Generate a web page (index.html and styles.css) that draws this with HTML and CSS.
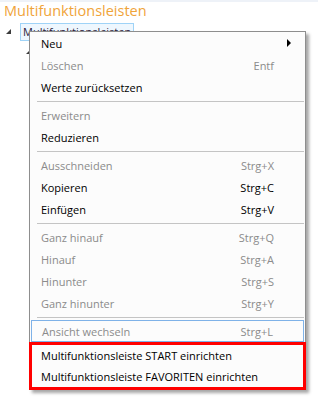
FILE: index.html
```html
<!DOCTYPE html>
<html>
<head>
<meta charset="utf-8">
<link rel="stylesheet" href="styles.css">
</head>
<body>
<div class="topline"></div>
<div class="title">Multifunktionsleisten</div>
<div class="tree">
  <div class="node">
    <span class="tri"></span>
    <span class="sel">Multifunktionsleisten</span>
  </div>
  <div class="node child">
    <span class="tri"></span>
  </div>
</div>

<div class="menu">
  <div class="item"><span class="label">Neu</span><span class="arrow"></span></div>
  <div class="item dis"><span class="label">Löschen</span><span class="key">Entf</span></div>
  <div class="item"><span class="label">Werte zurücksetzen</span></div>
  <div class="sep"></div>
  <div class="item dis"><span class="label">Erweitern</span></div>
  <div class="item"><span class="label">Reduzieren</span></div>
  <div class="sep"></div>
  <div class="item dis"><span class="label">Ausschneiden</span><span class="key">Strg+X</span></div>
  <div class="item"><span class="label">Kopieren</span><span class="key">Strg+C</span></div>
  <div class="item"><span class="label">Einfügen</span><span class="key">Strg+V</span></div>
  <div class="sep"></div>
  <div class="item dis"><span class="label">Ganz hinauf</span><span class="key">Strg+Q</span></div>
  <div class="item dis"><span class="label">Hinauf</span><span class="key">Strg+A</span></div>
  <div class="item dis"><span class="label">Hinunter</span><span class="key">Strg+S</span></div>
  <div class="item dis"><span class="label">Ganz hinunter</span><span class="key">Strg+Y</span></div>
  <div class="sep"></div>
  <div class="item dis focus"><span class="label">Ansicht wechseln</span><span class="key">Strg+L</span></div>
  <div class="mark">
    <div class="item"><span class="label">Multifunktionsleiste START einrichten</span></div>
    <div class="item"><span class="label">Multifunktionsleiste FAVORITEN einrichten</span></div>
  </div>
</div>
</body>
</html>
```
FILE: styles.css
```css
html, body {
  margin: 0;
  padding: 0;
  background: #ffffff;
  width: 318px;
  height: 400px;
  overflow: hidden;
  font-family: "Open Sans", "Noto Sans", sans-serif;
}
body {
  position: relative;
}
.topline {
  height: 2px;
  background: #eef2f8;
}
.title {
  color: #f0a43a;
  font-size: 14.5px;
  line-height: 18px;
  padding-left: 4px;
}
.tree {
  padding-left: 6px;
  margin-top: 2px;
}
.node {
  display: flex;
  align-items: center;
  height: 19px;
  gap: 9px;
}
.node.child {
  padding-left: 20px;
  height: 20px;
}
.tri {
  width: 0;
  height: 0;
  border-left: 5px solid transparent;
  border-bottom: 5px solid #3c3c3c;
}
.sel {
  border: 1px solid #9fd3f7;
  background: #eef7fe;
  font-size: 11px;
  line-height: 16px;
  padding: 0 2px;
  color: #2a1a3a;
  white-space: nowrap;
}
.menu {
  position: absolute;
  left: 29px;
  top: 31px;
  width: 275px;
  background: #fcfcfc;
  border: 1px solid #8e8e8e;
  box-shadow: 3px 3px 3px rgba(0,0,0,0.35);
  font-size: 11px;
}
.item {
  display: flex;
  align-items: center;
  justify-content: space-between;
  height: 22px;
  padding: 0 31px 0 11px;
  color: #000;
  white-space: nowrap;
  box-sizing: border-box;
}
.item.dis {
  color: #8b8b8b;
}
.arrow {
  width: 0;
  height: 0;
  border-top: 4px solid transparent;
  border-bottom: 4px solid transparent;
  border-left: 4px solid #000;
  margin-right: -17px;
}
.sep {
  height: 1px;
  background: #c4c4c4;
  margin: 3px 1px 2px 7px;
}
.focus {
  border: 1px solid #7fb2e8;
  margin: 0 1px;
  padding-left: 10px;
  padding-right: 30px;
}
.mark {
  border: 3px solid #ff0000;
  margin: 0 -1px -1px -1px;
}
.mark .item {
  height: 21px;
  padding-left: 9px;
}
```
